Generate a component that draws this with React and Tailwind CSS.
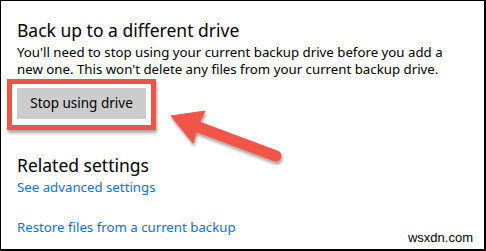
export default function App() {
  return (
    <div className="relative w-[486px] h-[251px] overflow-hidden bg-white border-l border-t border-r-2 border-b-2 border-black" style={{ fontFamily: '"Noto Sans", "Open Sans", sans-serif' }}>
      <div className="pl-[16px] pt-[17px] text-black">
        <h1 className="text-[17.5px] leading-[24px] font-normal">Back up to a different drive</h1>
        <p className="mt-[2px] text-[13.25px] leading-[17px] w-[450px]">You'll need to stop using your current backup drive before you add a new one. This won't delete any files from your current backup drive.</p>
        <div className="relative mt-[10px] w-[129px]">
          <div className="absolute left-[-10px] top-[-9px] w-[149px] h-[51px] border-[5px] border-[#ee5547] shadow-[1px_3px_3px_rgba(0,0,0,0.35)]" />
          <button className="block w-[129px] h-[31px] bg-[#cccccc] text-[13.5px] text-black">Stop using drive</button>
        </div>
        <h2 className="mt-[34px] text-[17.5px] leading-[24px] font-normal">Related settings</h2>
        <div className="mt-[2px] text-[13.25px] leading-[17px] text-[#1272cc]">See advanced settings</div>
        <div className="mt-[23px] text-[13.25px] leading-[17px] text-[#1272cc]">Restore files from a current backup</div>
      </div>
      <svg className="absolute left-0 top-0" width="486" height="251" viewBox="0 0 486 251">
        <defs>
          <filter id="sh" x="-20%" y="-20%" width="140%" height="140%">
            <feDropShadow dx="1" dy="3" stdDeviation="1.5" floodColor="#000" floodOpacity="0.35" />
          </filter>
        </defs>
        <g filter="url(#sh)" fill="#f05547" stroke="#f05547">
          <line x1="192" y1="124" x2="275" y2="155" strokeWidth="11" strokeLinecap="round" />
          <polygon points="170,115 204,110 197,125 192,142" strokeWidth="1" strokeLinejoin="round" />
        </g>
      </svg>
      <div className="absolute right-[11px] bottom-[4px] text-[13px] leading-[15px] text-black" style={{ fontFamily: '"Liberation Sans", Arial, sans-serif' }}>wsxdn.com</div>
    </div>
  );
}
